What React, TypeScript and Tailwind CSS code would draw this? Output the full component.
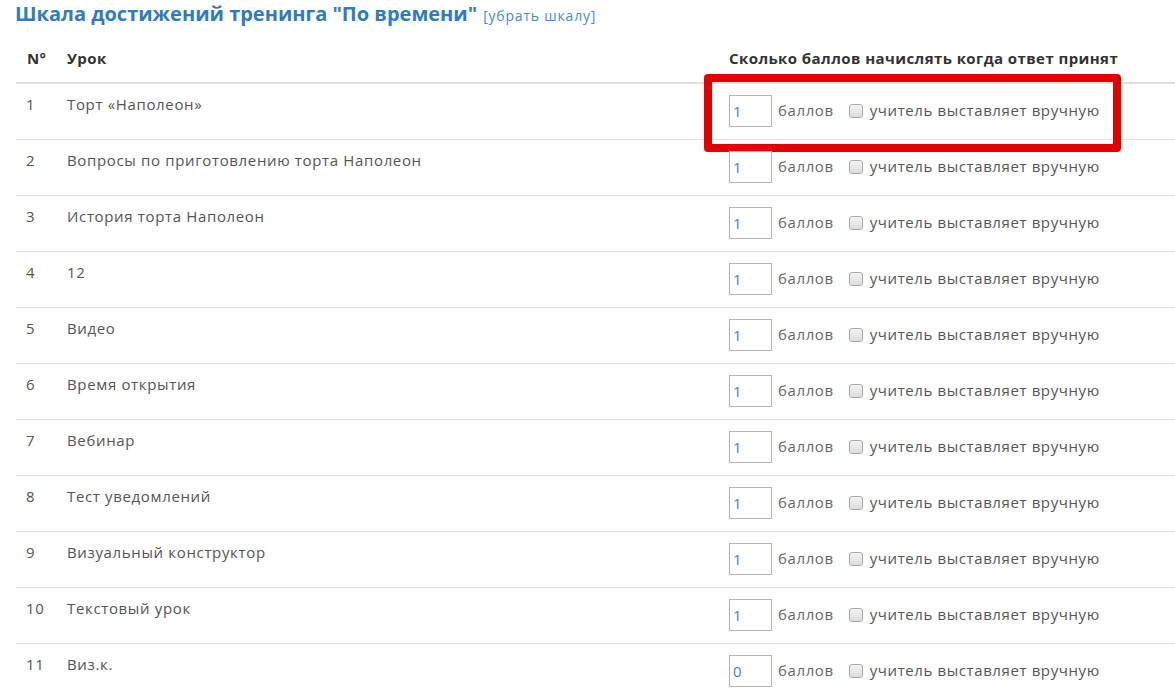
import React from "react";

const rows: [number, string, string][] = [
  [1, "Торт «Наполеон»", "1"],
  [2, "Вопросы по приготовлению торта Наполеон", "1"],
  [3, "История торта Наполеон", "1"],
  [4, "12", "1"],
  [5, "Видео", "1"],
  [6, "Время открытия", "1"],
  [7, "Вебинар", "1"],
  [8, "Тест уведомлений", "1"],
  [9, "Визуальный конструктор", "1"],
  [10, "Текстовый урок", "1"],
  [11, "Виз.к.", "0"],
];

function Points({ value }: { value: string }) {
  return (
    <div className="flex items-center">
      <div className="w-[43px] h-[32px] border border-[#b5b5b5] bg-white flex items-center pl-[3px] text-[15px] text-[#4a7fb5]">
        {value}
      </div>
      <span className="ml-[6px] -mt-[2px] text-[15px] tracking-[0.6px] text-[#666]">баллов</span>
      <span className="ml-[15px] w-[14px] h-[14px] rounded-[3px] border border-[#a9a9a9] bg-gradient-to-b from-[#f4f4f4] to-[#dcdcdc]" />
      <span className="ml-[7px] -mt-[2px] text-[15px] tracking-[0.6px] text-[#555]">учитель выставляет вручную</span>
    </div>
  );
}

export default function App() {
  return (
    <div className="w-[1175px] h-[695px] overflow-hidden bg-white font-['Open_Sans','Liberation_Sans',sans-serif]">
      <div className="pl-[15px] flex items-baseline leading-[28px]">
        <span className="text-[20px] font-bold text-[#2f7bbf]">Шкала достижений тренинга "По времени"</span>
        <span className="ml-[6px] text-[14px] tracking-[0.8px] text-[#4a8bc8]">[убрать шкалу]</span>
      </div>
      <div className="ml-[16px] mt-[10px] w-[1200px]">
        <div className="flex h-[44px] items-end pb-[13px] border-b-2 border-[#e0e0e0] text-[15px] font-bold tracking-[0.42px] text-[#333]">
          <div className="w-[40px] pl-[11px]">N°</div>
          <div className="w-[662px] pl-[11px]">Урок</div>
          <div className="pl-[11px]">Сколько баллов начислять когда ответ принят</div>
        </div>
        {rows.map(([n, title, v]) => (
          <div key={n} className="relative flex h-[56px] border-b border-[#e3e3e3] text-[15px] text-[#555]">
            <div className="w-[40px] pl-[10px] pt-[9px] tracking-[0.6px]">{n}</div>
            <div className="w-[662px] pl-[11px] pt-[9px] tracking-[0.65px]">{title}</div>
            <div className="pl-[11px] pt-[11px]">
              <Points value={v} />
            </div>
            {n === 1 && (
              <div className="absolute left-[688px] top-[-10px] w-[417px] h-[78px] border-[8px] border-[#e30000] rounded-[4px]" />
            )}
          </div>
        ))}
      </div>
    </div>
  );
}
